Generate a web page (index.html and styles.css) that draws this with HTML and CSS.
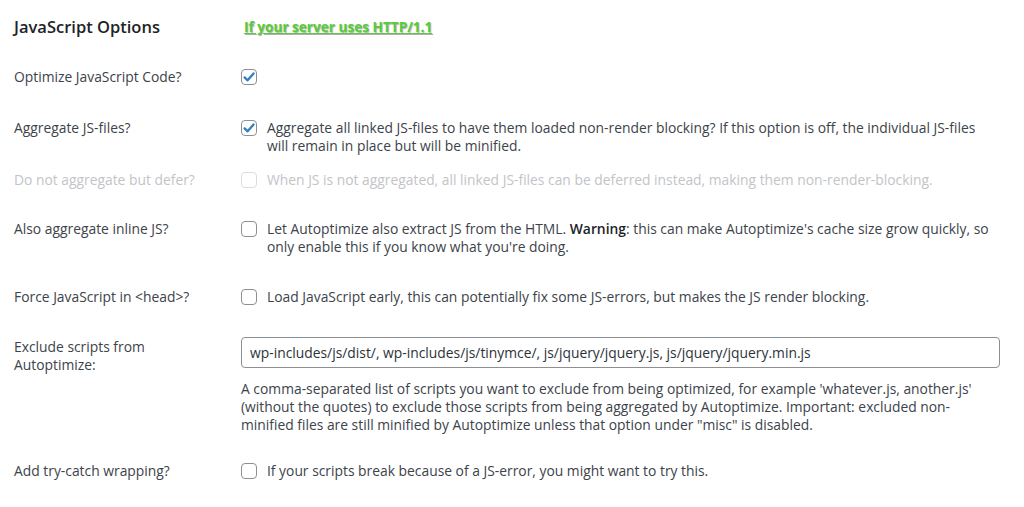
FILE: index.html
```html
<!DOCTYPE html>
<html>

<head>
    <title>Autoptimize - JavaScript Options</title>
    <link rel="stylesheet" href="styles.css">
</head>

<body>
    <div class="wrap">

        <div class="section-head">
            <h2>JavaScript Options</h2>
            <a class="http-link" href="#">If your server uses HTTP/1.1</a>
        </div>

        <div class="opt-row row-optimize">
            <div class="opt-label">Optimize JavaScript Code?</div>
            <div class="opt-control">
                <span class="cb checked"><svg viewBox="0 0 16 16" width="16" height="16"><path d="M3.6 8.4 L6.6 11.3 L12.6 4.4" fill="none" stroke="#2f7fc1" stroke-width="2.3" stroke-linecap="round" stroke-linejoin="round"/></svg></span>
            </div>
        </div>

        <div class="opt-row row-aggregate">
            <div class="opt-label">Aggregate JS-files?</div>
            <div class="opt-control">
                <span class="cb checked"><svg viewBox="0 0 16 16" width="16" height="16"><path d="M3.6 8.4 L6.6 11.3 L12.6 4.4" fill="none" stroke="#2f7fc1" stroke-width="2.3" stroke-linecap="round" stroke-linejoin="round"/></svg></span>
                <span class="opt-text">Aggregate all linked JS-files to have them loaded non-render blocking? If this option is off, the individual JS-files will remain in place but will be minified.</span>
            </div>
        </div>

        <div class="opt-row row-defer disabled">
            <div class="opt-label">Do not aggregate but defer?</div>
            <div class="opt-control">
                <span class="cb"></span>
                <span class="opt-text">When JS is not aggregated, all linked JS-files can be deferred instead, making them non-render-blocking.</span>
            </div>
        </div>

        <div class="opt-row row-inline">
            <div class="opt-label">Also aggregate inline JS?</div>
            <div class="opt-control">
                <span class="cb"></span>
                <span class="opt-text">Let Autoptimize also extract JS from the HTML. <strong>Warning</strong>: this can make Autoptimize's cache size grow quickly, so only enable this if you know what you're doing.</span>
            </div>
        </div>

        <div class="opt-row row-force">
            <div class="opt-label">Force JavaScript in &lt;head&gt;?</div>
            <div class="opt-control">
                <span class="cb"></span>
                <span class="opt-text">Load JavaScript early, this can potentially fix some JS-errors, but makes the JS render blocking.</span>
            </div>
        </div>

        <div class="opt-row row-exclude">
            <div class="opt-label">Exclude scripts from<br>Autoptimize:</div>
            <div class="opt-control stacked">
                <input class="text-input" type="text" value="wp-includes/js/dist/, wp-includes/js/tinymce/, js/jquery/jquery.js, js/jquery/jquery.min.js">
                <p class="description">A comma-separated list of scripts you want to exclude from being optimized, for example 'whatever.js, another.js' (without the quotes) to exclude those scripts from being aggregated by Autoptimize. Important: excluded non-minified files are still minified by Autoptimize unless that option under "misc" is disabled.</p>
            </div>
        </div>

        <div class="opt-row row-trycatch">
            <div class="opt-label">Add try-catch wrapping?</div>
            <div class="opt-control">
                <span class="cb"></span>
                <span class="opt-text">If your scripts break because of a JS-error, you might want to try this.</span>
            </div>
        </div>

    </div>
</body>

</html>
```

FILE: styles.css
```css
html, body {
    margin: 0;
    background-color: #fff;
}

body {
    font-family: "Open Sans", "Noto Sans", sans-serif;
    font-size: 13.85px;
    line-height: 18px;
    color: #3c434a;
}

.wrap {
    padding: 15px 23px 0 14px;
}

/* Section title + http link */
.section-head {
    display: flex;
    align-items: center;
    height: 24px;
}

.section-head h2 {
    margin: 0;
    width: 230px;
    font-size: 16.5px;
    font-weight: 600;
    color: #1d2327;
}

.http-link {
    font-size: 13.6px;
    font-weight: 700;
    color: #55cc3a;
    text-decoration: underline;
    text-shadow: 1px 1px 1px #b0b0b0;
}

/* Option rows */
.opt-row {
    display: flex;
}

.opt-label {
    width: 227px;
    flex-shrink: 0;
}

.opt-control {
    flex: 1;
    display: flex;
    align-items: flex-start;
    gap: 10px;
}

.opt-control.stacked {
    flex-direction: column;
    gap: 0;
}

.opt-text {
    max-width: 733px;
}

.cb {
    flex-shrink: 0;
    display: block;
    width: 16px;
    height: 16px;
    margin-top: 1px;
    border: 1px solid #8c8f94;
    border-radius: 4px;
    box-sizing: border-box;
    background: #fff;
    position: relative;
}

.cb svg {
    position: absolute;
    left: -1px;
    top: -1px;
}

.opt-text strong {
    font-weight: 600;
    color: #1d2327;
}

.disabled {
    color: #c3c4c7;
}

.disabled .cb {
    border-color: #dcdcde;
}

.row-optimize { margin-top: 29px; }
.row-aggregate { margin-top: 33px; }
.row-defer { margin-top: 16px; }
.row-inline { margin-top: 31px; }
.row-force { margin-top: 32px; }
.row-exclude { margin-top: 31px; }
.row-trycatch { margin-top: 28px; }

.row-exclude .opt-label {
    padding-top: 1px;
}

.text-input {
    width: 759px;
    height: 31px;
    box-sizing: border-box;
    margin: 0;
    padding: 0 8px;
    border: 1px solid #8c8f94;
    border-radius: 4px;
    font-family: inherit;
    font-size: 13.85px;
    color: #2c3338;
}

.description {
    margin: 12px 0 0;
    width: 759px;
}
```
